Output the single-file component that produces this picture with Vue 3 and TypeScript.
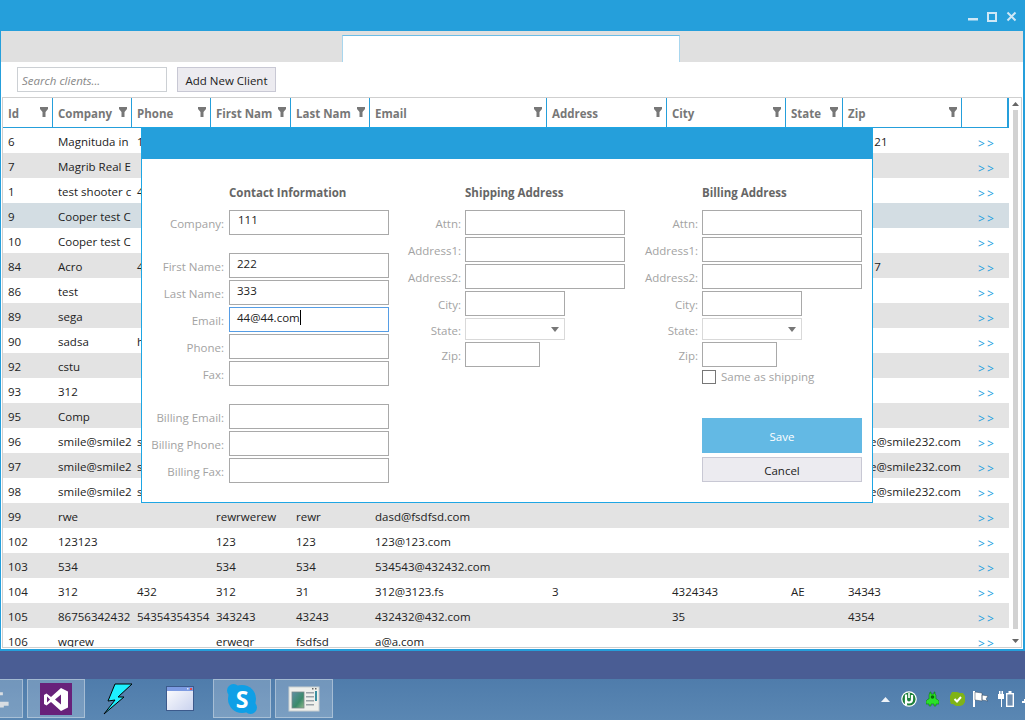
<script setup lang="ts">
interface Row { id: string; company: string; phone?: string; first?: string; last?: string; email?: string; address?: string; city?: string; state?: string; zip?: string; selected?: boolean }

const columns = [
  { label: 'Id', filter: true },
  { label: 'Company', filter: true },
  { label: 'Phone', filter: true },
  { label: 'First Nam', filter: true },
  { label: 'Last Nam', filter: true },
  { label: 'Email', filter: true },
  { label: 'Address', filter: true },
  { label: 'City', filter: true },
  { label: 'State', filter: true },
  { label: 'Zip', filter: true },
  { label: '', filter: false },
]

const rows: Row[] = [
  { id: '6', company: 'Magnituda in', phone: '1', zip: '432121' },
  { id: '7', company: 'Magrib Real E' },
  { id: '1', company: 'test shooter c', phone: '4' },
  { id: '9', company: 'Cooper test C', selected: true },
  { id: '10', company: 'Cooper test C' },
  { id: '84', company: 'Acro', phone: '4', zip: '43217' },
  { id: '86', company: 'test' },
  { id: '89', company: 'sega' },
  { id: '90', company: 'sadsa', phone: 'h' },
  { id: '92', company: 'cstu' },
  { id: '93', company: '312' },
  { id: '95', company: 'Comp' },
  { id: '96', company: 'smile@smile2', phone: 's', zip: 'smile@smile232.com' },
  { id: '97', company: 'smile@smile2', phone: 's', zip: 'smile@smile232.com' },
  { id: '98', company: 'smile@smile2', phone: 's', zip: 'smile@smile232.com' },
  { id: '99', company: 'rwe', first: 'rewrwerew', last: 'rewr', email: 'dasd@fsdfsd.com' },
  { id: '102', company: '123123', first: '123', last: '123', email: '123@123.com' },
  { id: '103', company: '534', first: '534', last: '534', email: '534543@432432.com' },
  { id: '104', company: '312', phone: '432', first: '312', last: '31', email: '312@3123.fs', address: '3', city: '4324343', state: 'AE', zip: '34343' },
  { id: '105', company: '86756342432', phone: '54354354354', first: '343243', last: '43243', email: '432432@432.com', city: '35', zip: '4354' },
  { id: '106', company: 'wqrew', first: 'erweqr', last: 'fsdfsd', email: 'a@a.com' },
]

function cells(r: Row): string[] {
  return [r.id, r.company, r.phone ?? '', r.first ?? '', r.last ?? '', r.email ?? '', r.address ?? '', r.city ?? '', r.state ?? '', r.zip ?? '']
}

const addressFields = ['Attn:', 'Address1:', 'Address2:']
</script>

<template>
  <div class="page">
    <div class="window">
      <div class="title">
        <svg class="winbtns" width="50" height="14" viewBox="0 0 50 14">
          <rect x="0" y="8" width="10" height="2.500" fill="#cfe8f6" />
          <rect x="20" y="3" width="8" height="8" fill="none" stroke="#cfe8f6" stroke-width="2" />
          <path d="M39.500 2.500l8 8M47.500 2.500l-8 8" stroke="#cfe8f6" stroke-width="2" fill="none" />
        </svg>
      </div>
      <div class="tabs"><div class="tab"></div></div>
      <div class="toolbar">
        <div class="search">Search clients...</div>
        <div class="btn add">Add New Client</div>
      </div>
      <div class="gridwrap">
        <div class="grid">
          <div class="head">
            <div v-for="(c, i) in columns" :key="i" class="hcell">
              <span class="hlabel">{{ c.label }}</span>
              <svg v-if="c.filter" class="funnel" width="8" height="10" viewBox="0 0 8 10"><path d="M0 0h8v2L5.500 5v5h-3V5L0 2z" fill="#777" /></svg>
            </div>
          </div>
          <div class="body">
            <div v-for="(r, n) in rows" :key="r.id" class="row" :class="{ alt: n % 2 === 1, sel: r.selected }">
              <div v-for="(v, j) in cells(r)" :key="j" class="cell">{{ v }}</div>
              <div class="cell link">&gt; &gt;</div>
            </div>
          </div>
        </div>
        <div class="scroll">
          <svg width="7" height="4" viewBox="0 0 7 4"><path d="M3.500 0L7 4H0z" fill="#666" /></svg>
          <div class="thumb"></div>
          <svg width="7" height="4" viewBox="0 0 7 4"><path d="M0 0h7L3.500 4z" fill="#666" /></svg>
        </div>
      </div>

      <div class="modal">
        <div class="mhead"></div>
        <div class="mbody">
          <div class="col c1">
            <div class="heading">Contact Information</div>
            <div class="field"><label>Company:</label><div class="inp first-inp">111</div></div>
            <div class="field gap"><label>First Name:</label><div class="inp">222</div></div>
            <div class="field"><label>Last Name:</label><div class="inp">333</div></div>
            <div class="field"><label>Email:</label><div class="inp focus">44@44.com<i class="caret"></i></div></div>
            <div class="field"><label>Phone:</label><div class="inp"></div></div>
            <div class="field"><label>Fax:</label><div class="inp"></div></div>
            <div class="field gap"><label>Billing Email:</label><div class="inp"></div></div>
            <div class="field"><label>Billing Phone:</label><div class="inp"></div></div>
            <div class="field"><label>Billing Fax:</label><div class="inp"></div></div>
          </div>
          <div class="col c2">
            <div class="heading">Shipping Address</div>
            <div v-for="f in addressFields" :key="f" class="field"><label>{{ f }}</label><div class="inp"></div></div>
            <div class="field"><label>City:</label><div class="inp w100"></div></div>
            <div class="field sel-field"><label>State:</label><div class="select"><svg width="8" height="5" viewBox="0 0 8 5"><path d="M0 0h8L4 5z" fill="#777" /></svg></div></div>
            <div class="field"><label>Zip:</label><div class="inp w75"></div></div>
          </div>
          <div class="col c3">
            <div class="heading">Billing Address</div>
            <div v-for="f in addressFields" :key="f" class="field"><label>{{ f }}</label><div class="inp"></div></div>
            <div class="field"><label>City:</label><div class="inp w100"></div></div>
            <div class="field sel-field"><label>State:</label><div class="select"><svg width="8" height="5" viewBox="0 0 8 5"><path d="M0 0h8L4 5z" fill="#777" /></svg></div></div>
            <div class="field"><label>Zip:</label><div class="inp w75"></div></div>
            <div class="check"><span class="box"></span><span class="check-label">Same as shipping</span></div>
            <div class="save">Save</div>
            <div class="btn cancel">Cancel</div>
          </div>
        </div>
      </div>
    </div>

    <div class="desktop"></div>

    <div class="taskbar">
      <div class="apps">
        <div class="tile partial">
          <svg width="23" height="37" viewBox="0 0 23 37"><path d="M0 12h3v3H0zM0 22h9v4H4v2H0z" fill="#d8dde2" /></svg>
        </div>
        <div class="tile">
          <svg width="32" height="32" viewBox="0 0 32 32"><rect width="32" height="32" fill="#68217a" /><path d="M21 5l7 3.500v16L21 28 11 19l-4.500 3.500L4 21V12l2.500-1.500L11 14zM7 13.500v6l3-3zM21 11.500l-6 5 6 5z" fill="#fff" fill-rule="evenodd" /></svg>
        </div>
        <div class="tile plain">
          <svg width="30" height="32" viewBox="0 0 30 32"><path d="M29 1H12L5 18l7-1L1 31l20-17h-6z" fill="#1ef0ff" stroke="#000" stroke-width="1" /></svg>
        </div>
        <div class="tile plain">
          <svg width="28" height="26" viewBox="0 0 28 26">
            <defs><linearGradient id="wb" x1="0" y1="0" x2="1" y2="1"><stop offset="0" stop-color="#fff" /><stop offset="1" stop-color="#c9d2ee" /></linearGradient></defs>
            <rect x=".5" y=".5" width="27" height="24" fill="url(#wb)" stroke="#3c5a8c" />
            <rect x="1" y="1" width="26" height="4" fill="#7d9be2" />
            <rect x="21" y="2" width="1.500" height="1.500" fill="#dfe6f8" />
            <rect x="24" y="2" width="2" height="2" fill="#e74b4b" />
          </svg>
        </div>
        <div class="tile">
          <div class="skype"><span>S</span></div>
        </div>
        <div class="tile">
          <svg width="32" height="26" viewBox="0 0 32 26">
            <defs><linearGradient id="pic" x1="0" y1="0" x2="1" y2="1"><stop offset="0" stop-color="#5f8fa6" /><stop offset=".6" stop-color="#3a8a6a" /><stop offset="1" stop-color="#8fb98a" /></linearGradient></defs>
            <rect x="1" y="1" width="30" height="24" fill="#eff0ec" stroke="#c9cfd0" />
            <rect x="4" y="6" width="12" height="16" fill="url(#pic)" stroke="#7b8a8a" stroke-width=".8" />
            <rect x="18" y="6" width="8" height="1.500" fill="#9aa3a8" /><rect x="18" y="10" width="8" height="1.500" fill="#9aa3a8" /><rect x="18" y="14" width="8" height="1.500" fill="#9aa3a8" /><rect x="18" y="18" width="8" height="1.500" fill="#9aa3a8" />
            <rect x="27" y="5" width="2" height="10" fill="#3b8fa0" />
            <rect x="24" y="2" width="1.500" height="1.500" fill="#666" /><rect x="27" y="2" width="1.500" height="1.500" fill="#666" />
          </svg>
        </div>
      </div>
      <div class="tray">
        <svg width="9" height="5" viewBox="0 0 9 5"><path d="M4.500 0L9 5H0z" fill="#eef3f8" /></svg>
        <svg class="m2" width="16" height="16" viewBox="0 0 16 16"><circle cx="8" cy="8" r="7.800" fill="#fff" /><circle cx="8" cy="8" r="6.600" fill="#1c7f3a" /><path d="M5 14.500V3.500M5 8.500a3 3 0 0 0 6 0V4" stroke="#fff" stroke-width="2.200" fill="none" /><path d="M8 2v5" stroke="#fff" stroke-width="1.600" /></svg>
        <svg width="13" height="16" viewBox="0 0 13 16"><path d="M4 1h1v2h3V1h1v2l1 1v4h1l2 2v3h-3v2H8v-2H5v2H3v-2H0v-3l2-2h1V4z" fill="#2ae02a" stroke="#0a6b0a" stroke-width=".5" /><circle cx="6.500" cy="6" r="1.800" fill="#0a6b0a" /></svg>
        <svg class="m2" width="15" height="14" viewBox="0 0 15 14"><path d="M2 0h5l3 1h3l2 3v6l-2 3-3 1H6L3 12H1L0 9V4z" fill="#7fb317" /><path d="M4.500 7l2.500 2.500L11 5" stroke="#fff" stroke-width="2" fill="none" /></svg>
        <svg class="mn1" width="16" height="16" viewBox="0 0 16 16"><path d="M0 0h2v16H0z" fill="#fff" /><path d="M2 1l7 1v8l-7-1zM9 4l6 1-2 3 2 2-6-1z" fill="#fff" stroke="#33465c" stroke-width=".5" /></svg>
        <svg width="16" height="16" viewBox="0 0 16 16"><path d="M1 0h1.500v3h1V0H5v3h1v5H4v8H3V8H0V3h1z" fill="#fff" /><rect x="8.700" y="2.700" width="6.600" height="12.600" fill="#6d8db0" stroke="#fff" stroke-width="1.400" /><rect x="10.500" y="0" width="3" height="2" fill="#fff" /></svg>
        <svg class="mn1" width="4" height="16" viewBox="0 0 4 16"><path d="M2 8h2v4H0v-2h2z" fill="#fff" /></svg>
      </div>
    </div>
  </div>
</template>

<style>
html, body { margin: 0; background: #4a5d94; }
</style>

<style scoped>
.page {
  width: 1025px;
  height: 720px;
  overflow: hidden;
  display: flex;
  flex-direction: column;
  background: #4a5d94;
  font-family: "Open Sans", "Noto Sans", sans-serif;
  font-size: 11.5px;
  color: #222;
}
.window {
  position: relative;
  height: 651px;
  flex: none;
  box-sizing: border-box;
  display: flex;
  flex-direction: column;
  background: #fff;
  border: solid #259fdb;
  border-width: 0 2px 2px 1px;
}
.title {
  height: 31px;
  flex: none;
  background: #259fdb;
  display: flex;
  justify-content: flex-end;
  align-items: flex-start;
  padding: 10px 5px 0 0;
  box-sizing: border-box;
}
.tabs {
  height: 31px;
  flex: none;
  background: #e0e0e0;
  padding: 4px 0 0 341px;
  box-sizing: border-box;
}
.tab {
  width: 338px;
  height: 27px;
  box-sizing: border-box;
  background: #fff;
  border: solid #a8d6ee;
  border-width: 1px 1px 0 1px;
  border-top-color: #6dbde6;
}
.toolbar {
  height: 35px;
  flex: none;
  display: flex;
  gap: 10px;
  padding: 5px 0 0 16px;
  box-sizing: border-box;
}
.search {
  width: 150px;
  height: 25px;
  box-sizing: border-box;
  border: 1px solid #ccd0d4;
  font-style: italic;
  color: #888;
  line-height: 25px;
  padding-left: 4px;
}
.btn {
  box-sizing: border-box;
  background: #ecebf0;
  border: 1px solid #c8c8d4;
  color: #222;
  text-align: center;
}
.add {
  width: 99px;
  height: 25px;
  line-height: 25px;
}
.gridwrap {
  flex: 1;
  min-height: 0;
  display: flex;
  box-sizing: border-box;
  margin: 0 1px 1px 1px;
  border: 1px solid #cfcfcf;
}
.grid {
  width: 1006px;
  flex: none;
  display: flex;
  flex-direction: column;
  overflow: hidden;
}
.head, .row {
  display: grid;
  grid-template-columns: 50px 79px 79px 80px 79px 177px 120px 119px 57px 119px 47px;
}
.head {
  height: 30px;
  flex: none;
  box-sizing: border-box;
  border-bottom: 1px solid #259fdb;
}
.hcell {
  display: flex;
  align-items: center;
  justify-content: space-between;
  box-sizing: border-box;
  border-right: 1px solid #259fdb;
  padding: 2px 4px 0 5px;
  min-width: 0;
}
.hcell:last-child { border-right-width: 2px; }
.hlabel {
  font-weight: 700;
  color: #777;
  white-space: nowrap;
}
.funnel { flex: none; margin-top: -3px; }
.body { flex: 1; overflow: hidden; }
.row { height: 25px; line-height: 25px; }
.row.alt { background: #e3e3e3; }
.row.sel { background: #d3dde3; }
.cell {
  padding: 1px 0 0 5px;
  overflow: hidden;
  white-space: nowrap;
  box-sizing: border-box;
  height: 25px;
}
.link {
  color: #1e9fe0;
  padding: 3px 0 0 16px;
  font-size: 12px;
  word-spacing: -1px;
}
.scroll {
  flex: 1;
  display: flex;
  flex-direction: column;
  align-items: center;
  padding: 4px 0;
  box-sizing: border-box;
}
.thumb { width: 5px; flex: 1; margin: 4px 0 10px; background: #d2d2d2; }
.modal {
  position: absolute;
  left: 140px;
  top: 127px;
  width: 732px;
  height: 376px;
  box-sizing: border-box;
  background: #fff;
  border: 1px solid #1ea6e4;
  display: flex;
  flex-direction: column;
}
.mhead { height: 31px; flex: none; background: #259fdb; }
.mbody { display: flex; flex: 1; }
.col { display: flex; flex-direction: column; padding-top: 26px; box-sizing: border-box; }
.c1 { width: 246px; --lw: 82px; --g: 5px; }
.c2 { width: 236px; --lw: 73px; --g: 4px; }
.c3 { width: 238px; --lw: 74px; --g: 4px; }
.heading {
  height: 17px;
  line-height: 15px;
  margin: 0 0 8px calc(var(--lw) + var(--g));
  font-weight: 700;
  color: #666;
  white-space: nowrap;
}
.field { display: flex; align-items: center; gap: var(--g); margin-bottom: 2px; height: 25px; }
.field.gap { margin-top: 16px; }
.field.sel-field { height: 22px; }
.field label {
  width: var(--lw);
  flex: none;
  text-align: right;
  color: #a3a3a3;
  white-space: nowrap;
  padding-top: 2px;
}
.inp {
  width: 160px;
  flex: none;
  height: 25px;
  box-sizing: border-box;
  border: 1px solid #a9a9a9;
  padding-left: 7px;
  line-height: 19px;
  color: #222;
  white-space: nowrap;
}
.first-inp { padding-left: 8px; line-height: 17px; }
.inp.focus { border-color: #569de5; }
.caret { display: inline-block; width: 1px; height: 15px; background: #000; vertical-align: -3px; }
.w100 { width: 100px; }
.w75 { width: 75px; }
.select {
  width: 100px;
  flex: none;
  height: 22px;
  box-sizing: border-box;
  border: 1px solid #d9d9d9;
  display: flex;
  align-items: center;
  justify-content: flex-end;
  padding-right: 5px;
}
.check {
  margin: 1px 0 0 78px;
  display: flex;
  align-items: center;
  gap: 5px;
  color: #a3a3a3;
  height: 14px;
  white-space: nowrap;
}
.check-label { margin-top: -2px; }
.box { width: 14px; height: 14px; box-sizing: border-box; border: 1px solid #777; display: block; }
.save {
  width: 160px;
  height: 35px;
  line-height: 37px;
  margin: 34px 0 0 78px;
  background: #63b9e4;
  color: #fff;
  text-align: center;
}
.cancel {
  width: 160px;
  height: 25px;
  line-height: 25px;
  margin: 4px 0 0 78px;
}
.desktop { height: 28px; flex: none; background: #4a5d94; }
.taskbar {
  height: 41px;
  flex: none;
  display: flex;
  justify-content: space-between;
  background: linear-gradient(#4f7cab, #5a87b3);
}
.apps { display: flex; gap: 4px; }
.tile {
  width: 58px;
  height: 39px;
  box-sizing: border-box;
  background: rgba(255, 255, 255, 0.2);
  border: 1px solid rgba(255, 255, 255, 0.35);
  display: flex;
  align-items: center;
  justify-content: center;
}
.tile.plain { background: none; border-color: transparent; }
.tile.partial { width: 23px; border-left: 0; justify-content: flex-start; }
.skype {
  position: relative;
  width: 28px;
  height: 28px;
  border-radius: 50%;
  background: #0f9fe6;
  color: #fff;
  font-weight: 700;
  font-size: 23px;
  line-height: 28px;
  text-align: center;
}
.skype span { position: relative; z-index: 1; }
.skype::before, .skype::after {
  content: "";
  position: absolute;
  width: 13px;
  height: 13px;
  border-radius: 50%;
  background: #0f9fe6;
}
.skype::before { left: -1px; top: -1px; }
.skype::after { right: -1px; bottom: -1px; }
.tray { display: flex; align-items: center; gap: 9px; margin-right: -1px; padding-bottom: 1px; }
.m2 { margin-left: 2px; }
.mn1 { margin-left: -1px; }
</style>
